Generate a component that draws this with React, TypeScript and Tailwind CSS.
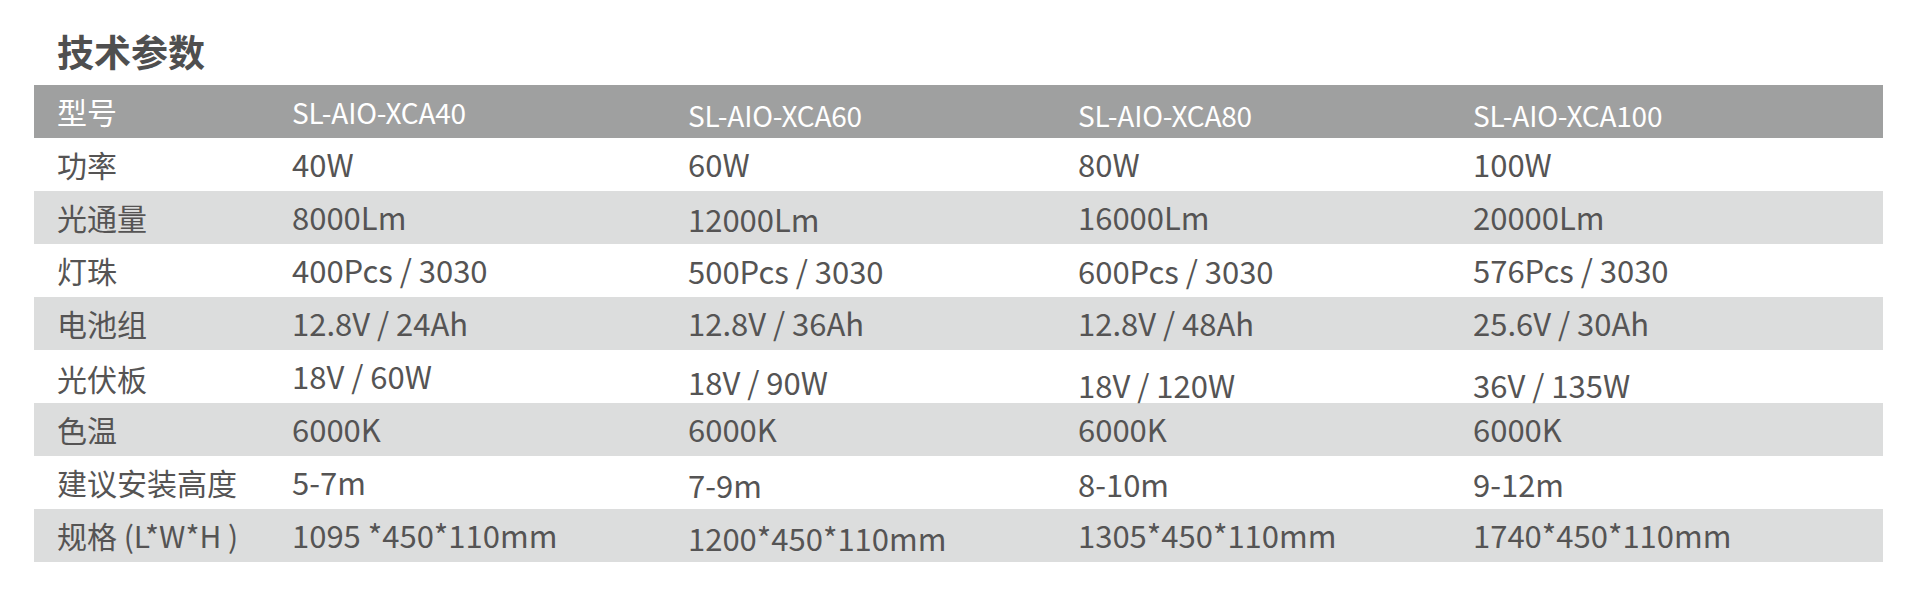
import React from "react";

const header = ["型号", "SL-AIO-XCA40", "SL-AIO-XCA60", "SL-AIO-XCA80", "SL-AIO-XCA100"];

const rows: string[][] = [
  ["功率", "40W", "60W", "80W", "100W"],
  ["光通量", "8000Lm", "12000Lm", "16000Lm", "20000Lm"],
  ["灯珠", "400Pcs / 3030", "500Pcs / 3030", "600Pcs / 3030", "576Pcs / 3030"],
  ["电池组", "12.8V / 24Ah", "12.8V / 36Ah", "12.8V / 48Ah", "25.6V / 30Ah"],
  ["光伏板", "18V / 60W", "18V / 90W", "18V / 120W", "36V / 135W"],
  ["色温", "6000K", "6000K", "6000K", "6000K"],
  ["建议安装高度", "5-7m", "7-9m", "8-10m", "9-12m"],
  ["规格 (L*W*H )", "1095 *450*110mm", "1200*450*110mm", "1305*450*110mm", "1740*450*110mm"],
];

// slight per-cell vertical shifts seen in the source picture
const shifts: string[][] = [
  ["", "", "", "", ""],
  ["", "", "translate-y-[2px]", "", ""],
  ["", "", "translate-y-[1px]", "translate-y-[1px]", ""],
  ["", "", "", "", ""],
  ["translate-y-[2px]", "", "translate-y-[6px]", "translate-y-[9px]", "translate-y-[9px]"],
  ["", "", "", "", ""],
  ["", "", "translate-y-[3px]", "translate-y-[2px]", "translate-y-[2px]"],
  ["", "", "translate-y-[3px]", "", ""],
];

const headerShifts = ["", "", "translate-y-[3px]", "translate-y-[3px]", "translate-y-[3px]"];

const font = { fontFamily: '"Noto Sans CJK SC", "Noto Sans", sans-serif' };

export default function App() {
  return (
    <div className="min-h-[591px] w-[1919px] bg-white" style={font}>
      <div className="pt-[29px] pl-[57px] pb-[12px]">
        <h1 className="text-[37px] font-bold leading-[44px] text-[#4f4f4f]">技术参数</h1>
      </div>
      <div className="ml-[34px] w-[1849px]">
        <div className="grid h-[53px] grid-cols-[258px_396px_390px_395px_1fr] items-center bg-[#9fa0a0] text-white">
          {header.map((c, i) => (
            <div
              key={i}
              className={
                (i === 0 ? "pl-[23px] text-[30px] " : "text-[28px] tracking-[-0.2px] ") + headerShifts[i]
              }
            >
              {c}
            </div>
          ))}
        </div>
        {rows.map((r, ri) => (
          <div
            key={ri}
            className={
              "grid h-[53px] grid-cols-[258px_396px_390px_395px_1fr] items-center text-[#555454] " +
              (ri % 2 === 1 ? "bg-[#dcdddd]" : "bg-white")
            }
          >
            {r.map((c, i) => (
              <div
                key={i}
                className={(i === 0 ? "pl-[23px] text-[30px] " : "text-[31px] ") + shifts[ri][i]}
              >
                {c}
              </div>
            ))}
          </div>
        ))}
      </div>
    </div>
  );
}
